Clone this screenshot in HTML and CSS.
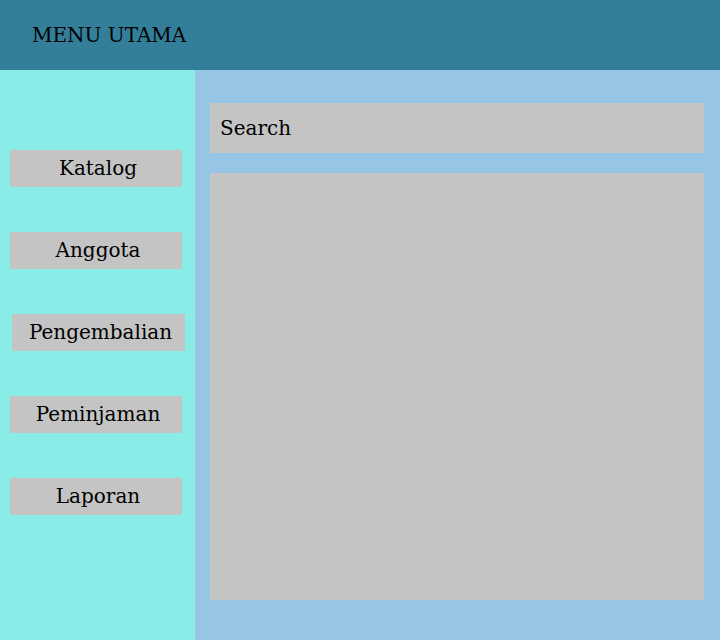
FILE: index.html
```html
<!DOCTYPE html>
<html lang="en">
<head>
  <meta charset="UTF-8">
  <title>Menu Utama</title>
  <link rel="stylesheet" href="styles.css">
</head>
<body>

  <!-- Header -->
  <div class="header">
    <h1>MENU UTAMA</h1>
  </div>

  <div class="layout">
    <!-- Sidebar Menu -->
    <div class="sidebar">
      <div class="menu-btn">Katalog</div>
      <div class="menu-btn">Anggota</div>
      <div class="menu-btn shift">Pengembalian</div>
      <div class="menu-btn">Peminjaman</div>
      <div class="menu-btn">Laporan</div>
    </div>

    <!-- Main Content -->
    <div class="main">
      <div class="search">Search</div>
      <div class="content"></div>
    </div>
  </div>

</body>
</html>
```

FILE: styles.css
```css
/* Global Styles */
body {
  font-family: "DejaVu Serif", serif;
  margin: 0;
  padding: 0;
  width: 720px;
  height: 640px;
  overflow: hidden;
  color: black;
}

.header {
  height: 70px;
  background-color: #337e99;
  display: flex;
  align-items: center;
  padding-left: 32px;
}

.header h1 {
  margin: 0;
  font-size: 20px;
  font-weight: normal;
}

.layout {
  display: flex;
  height: 570px;
}

.sidebar {
  width: 195px;
  background-color: #8aece6;
  display: flex;
  flex-direction: column;
  gap: 45px;
  padding-top: 80px;
  box-sizing: border-box;
}

.menu-btn {
  width: 172px;
  height: 37px;
  margin-left: 10px;
  background-color: #c4c4c4;
  display: flex;
  align-items: center;
  justify-content: center;
  font-size: 20px;
  padding-left: 4px;
  padding-bottom: 1px;
  box-sizing: border-box;
}

.menu-btn.shift {
  margin-left: 12px;
  width: 173px;
}

.main {
  flex: 1;
  background-color: #96c5e6;
  padding: 33px 16px 40px 15px;
  display: flex;
  flex-direction: column;
  gap: 20px;
}

.search {
  height: 50px;
  background-color: #c4c4c4;
  display: flex;
  align-items: center;
  padding-left: 10px;
  font-size: 20px;
}

.content {
  flex: 1;
  background-color: #c4c4c4;
}
```
